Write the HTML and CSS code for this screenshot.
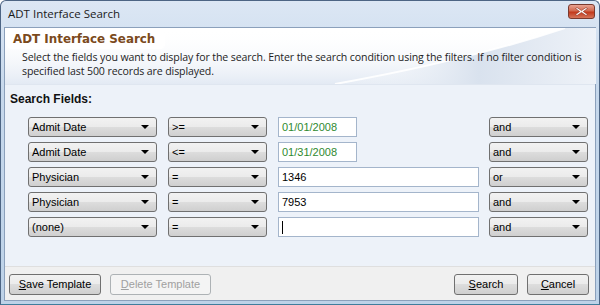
FILE: index.html
```html
<!DOCTYPE html>
<html lang="en">

<head>
    <meta charset="UTF-8">
    <title>ADT Interface Search</title>
    <link rel="stylesheet" href="styles.css">
</head>

<body>
    <div class="window">
        <div class="titlebar">
            <span class="title">ADT Interface Search</span>
            <span class="close">
                <svg width="13" height="9" viewBox="0 0 13 9">
                    <path d="M2 0.5 L6.5 3.6 L11 0.5 L12.5 1.5 L8.3 4.5 L12.5 7.5 L11 8.5 L6.5 5.4 L2 8.5 L0.5 7.5 L4.7 4.5 L0.5 1.5 Z" fill="#fff" stroke="#8a2a1a" stroke-width="0.6"/>
                </svg>
            </span>
        </div>
        <div class="client">
            <div class="header">
                <svg class="swoosh" width="591" height="56" viewBox="0 0 591 56" preserveAspectRatio="none">
                    <defs>
                        <linearGradient id="sw" x1="0" y1="0" x2="1" y2="0">
                            <stop offset="0" stop-color="#ffffff" stop-opacity="0"/>
                            <stop offset="0.55" stop-color="#d9e2ee"/>
                            <stop offset="1" stop-color="#eef2f8"/>
                        </linearGradient>
                        <linearGradient id="fade" x1="0" y1="0" x2="0" y2="1">
                            <stop offset="0" stop-color="#ffffff" stop-opacity="0"/>
                            <stop offset="1" stop-color="#e3eaf4"/>
                        </linearGradient>
                    </defs>
                    <rect x="0" y="0" width="591" height="56" fill="url(#fade)"/>
                    <path d="M330 56 C 420 40, 500 20, 560 0 L 591 0 L 591 56 Z" fill="url(#sw)"/>
                    <path d="M330 56 C 420 40, 500 20, 560 0" fill="none" stroke="#ffffff" stroke-width="2" opacity="0.9"/>
                </svg>
                <div class="heading">ADT Interface Search</div>
                <p class="desc">Select the fields you want to display for the search. Enter the search condition using the filters. If no filter condition is specified last 500 records are displayed.</p>
            </div>

            <div class="fields">
                <div class="fields-label">Search Fields:</div>
                <div class="rows">
                    <div class="combo">Admit Date</div>
                    <div class="combo">&gt;=</div>
                    <div class="input date">01/01/2008</div>
                    <div class="combo">and</div>

                    <div class="combo">Admit Date</div>
                    <div class="combo">&lt;=</div>
                    <div class="input date">01/31/2008</div>
                    <div class="combo">and</div>

                    <div class="combo">Physician</div>
                    <div class="combo">=</div>
                    <div class="input">1346</div>
                    <div class="combo">or</div>

                    <div class="combo">Physician</div>
                    <div class="combo">=</div>
                    <div class="input">7953</div>
                    <div class="combo">and</div>

                    <div class="combo">(none)</div>
                    <div class="combo">=</div>
                    <div class="input"><span class="caret"></span></div>
                    <div class="combo">and</div>
                </div>
            </div>

            <div class="footer">
                <div class="btn-group">
                    <button class="btn save"><u>S</u>ave Template</button>
                    <button class="btn delete" disabled><u>D</u>elete Template</button>
                </div>
                <div class="btn-group">
                    <button class="btn search"><u>S</u>earch</button>
                    <button class="btn cancel"><u>C</u>ancel</button>
                </div>
            </div>
        </div>
    </div>
</body>

</html>
```

FILE: styles.css
```css
body {
    margin: 0;
    background: #ffffff;
}

.window {
    width: 600px;
    height: 305px;
    box-sizing: border-box;
    border: 1px solid #4d6584;
    border-radius: 6px 6px 0 0;
    background: linear-gradient(#dce7f4, #c6d8ec 30%, #bdd2e8);
    padding: 0 3px 3px 3px;
    display: flex;
    flex-direction: column;
    border-bottom-color: #3f7d9c;
}

.titlebar {
    height: 26px;
    display: flex;
    align-items: center;
    justify-content: space-between;
    padding-left: 4px;
}

.title {
    font-family: "Open Sans", sans-serif;
    font-size: 11.5px;
    color: #1a1a1a;
    margin-top: -2px;
}

.close {
    width: 27px;
    height: 15px;
    box-sizing: border-box;
    border: 1px solid #7a3a2e;
    border-radius: 3px;
    background: linear-gradient(#e9a493, #d1694f 45%, #c2391c 55%, #d5755a);
    display: flex;
    align-items: center;
    justify-content: center;
    margin-top: -6px;
    margin-right: 1px;
}

.client {
    flex: 1;
    border: 1px solid #8ba0bb;
    background: #edf2f9;
    display: flex;
    flex-direction: column;
}

/* header */
.header {
    position: relative;
    height: 56px;
    background: #ffffff;
    padding: 1px 0 0 2px;
    box-sizing: border-box;
}

.swoosh {
    position: absolute;
    left: 0;
    top: 0;
}

.heading {
    position: relative;
    display: inline-block;
    background: #ffffff;
    border-radius: 5px;
    padding: 2px 10px 3px 6px;
    font-family: "DejaVu Sans", sans-serif;
    font-weight: bold;
    font-size: 11.9px;
    color: #7b4a1c;
    box-shadow: 0 0 2px #ffffff;
}

.desc {
    position: relative;
    margin: 1px 0 0 15px;
    font-family: "Open Sans", sans-serif;
    font-size: 10.6px;
    letter-spacing: -0.12px;
    line-height: 14px;
    color: #1e1e1e;
    width: 572px;
}

/* fields */
.fields {
    flex: 1;
    padding: 7px 0 0 5px;
    border-top: 1px solid #dfe6f0;
}

.fields-label {
    font-family: "Liberation Sans", sans-serif;
    font-weight: bold;
    font-size: 12px;
    color: #111111;
    height: 25px;
}

.rows {
    display: grid;
    grid-template-columns: 129px 99px 200px 99px;
    grid-auto-rows: 20px;
    column-gap: 11px;
    row-gap: 5px;
    margin-left: 18px;
}

.combo,
.input {
    font-family: "Liberation Sans", sans-serif;
    font-size: 11px;
    box-sizing: border-box;
    display: flex;
    align-items: center;
    padding-left: 3px;
}

.combo {
    position: relative;
    border: 1px solid #707070;
    border-radius: 3px;
    background: linear-gradient(#f2f2f2, #ebebeb 50%, #dddddd 50%, #cfcfcf);
    color: #000000;
}

.combo::after {
    content: "";
    position: absolute;
    right: 7px;
    top: 7px;
    border-left: 4px solid transparent;
    border-right: 4px solid transparent;
    border-top: 4px solid #000000;
}

.input {
    background: #ffffff;
    border: 1px solid #a4b5cb;
    color: #000000;
    margin-right: -1px;
}

.input.date {
    width: 79px;
    color: #2f8a2f;
}

.caret {
    width: 1px;
    height: 13px;
    background: #000000;
}

/* footer */
.footer {
    height: 34px;
    box-sizing: border-box;
    background: #f0f0f0;
    border-top: 1px solid #dfdfdf;
    display: flex;
    align-items: center;
    justify-content: space-between;
    padding: 1px 6px 0 4px;
}

.btn-group {
    display: flex;
    gap: 9px;
}

.btn {
    height: 21px;
    box-sizing: border-box;
    border: 1px solid #707070;
    border-radius: 3px;
    background: linear-gradient(#f2f2f2, #ebebeb 50%, #dddddd 50%, #cfcfcf);
    font-family: "Liberation Sans", sans-serif;
    font-size: 11px;
    color: #000000;
    padding: 0;
}

.save {
    width: 92px;
}

.delete {
    width: 101px;
    border-color: #adb2b5;
    background: #f4f4f4;
    color: #a0a0a0;
}

.search {
    width: 64px;
}

.cancel {
    width: 62px;
}
```
